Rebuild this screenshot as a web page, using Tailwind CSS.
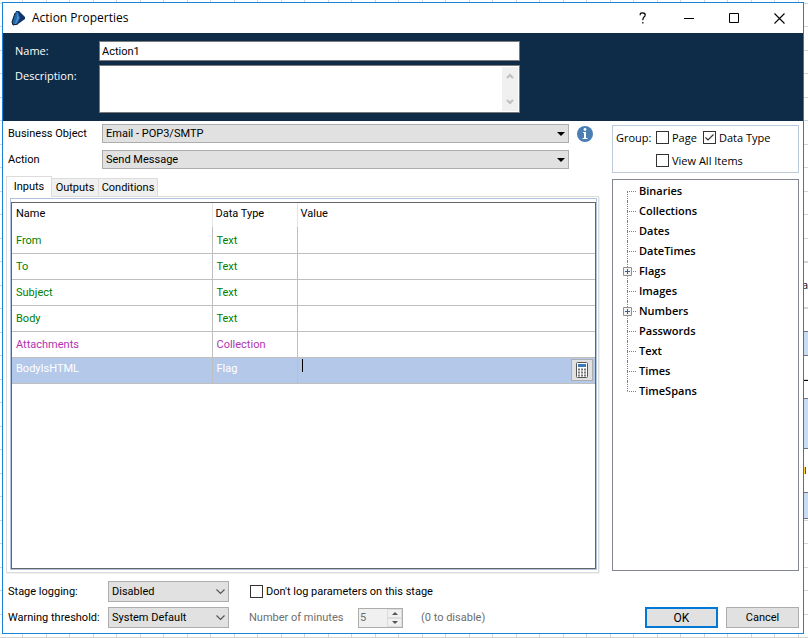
<!DOCTYPE html>
<html lang="en">
<head>
  <meta charset="UTF-8">
  <meta name="viewport" content="width=device-width, initial-scale=1.0">
  <title>Action Properties</title>
  <script src="https://cdn.jsdelivr.net/npm/@tailwindcss/browser@4"></script>
</head>
<body class="relative flex min-h-screen flex-col overflow-hidden bg-white bg-[repeating-linear-gradient(to_right,transparent_0_22px,#d4d4d4_22px_23px,transparent_23px_46px,#d4d4d4_46px_47px),repeating-linear-gradient(to_bottom,transparent_0_3px,#d4d4d4_3px_4px,transparent_4px_26px,#d4d4d4_26px_27px,transparent_27px_47px)] pt-[2px] pr-1 pb-1 pl-[2px] font-[Roboto,sans-serif] text-[11px] leading-4 text-black">

  <!-- Process canvas showing past the dialog edge -->
  <div class="absolute inset-y-0 right-0 w-1 overflow-hidden font-['Open_Sans',sans-serif]" aria-hidden="true">
    <div class="absolute inset-x-0 top-[262px] h-[46px] border-y border-zinc-300 bg-white"></div>
    <div class="absolute top-[277px] -left-[2px]">a</div>
    <div class="absolute inset-x-0 top-[331px] h-[25px] border-y border-gray-500 bg-[#c9ddf2]"></div>
    <div class="absolute inset-x-0 top-[380px] h-px bg-black"></div>
    <div class="absolute inset-x-0 top-[398px] h-[51px] border-y border-gray-500 bg-[#c9ddf2]"></div>
    <div class="absolute inset-x-0 top-[449px] h-[43px] bg-white"></div>
    <div class="absolute top-[467px] left-0 h-[7px] w-[2px] border-r border-slate-600 bg-amber-300"></div>
    <div class="absolute inset-x-0 top-[492px] h-[27px] border-y border-gray-500 bg-[#c9ddf2]"></div>
  </div>

  <div class="relative flex flex-1 flex-col border border-[#1883d7] bg-white">
    <!-- Title bar -->
    <header class="flex h-[30px] items-center pl-2 font-['Open_Sans',sans-serif] text-xs">
      <svg class="h-[15px] w-[15px]" viewBox="0 0 15 15">
        <path d="M5 0H8L14 6V8L7 13L2 14L1 11Z" fill="#10346b"/>
        <path d="M5 1H7L9 7L6 13H2V10Z" fill="#2468ac"/>
        <path d="M6 1L8 7L5 13H4L6 7Z" fill="#4b92d2"/>
        <path d="M4 2L1 11L2 14L7 13" fill="none" stroke="#0f1f33"/>
      </svg>
      <h1 class="ml-[6px]">Action Properties</h1>
      <div class="ml-auto flex h-full">
        <button class="flex w-[46px] items-center justify-center" aria-label="Help">
          <svg class="h-3 w-2" viewBox="0 0 8 12" fill="none" stroke="#000" stroke-width="1.2"><path d="M1.200 3.200V1.800Q1.500.8 3.500.8Q6.200.8 6.200 2.900Q6.200 4.200 4.800 5.300Q3.800 6.200 3.800 8.200M3.800 10V11.600"/></svg>
        </button>
        <button class="flex w-[46px] items-center justify-center" aria-label="Minimize">
          <svg class="h-[11px] w-[10px]" viewBox="0 0 10 11"><path d="M0 5.500H10" stroke="#000"/></svg>
        </button>
        <button class="flex w-[44px] items-center justify-center" aria-label="Maximize">
          <svg class="h-[10px] w-[10px]" viewBox="0 0 10 10"><path d="M.5.5H9.500V9.500H.5Z" fill="none" stroke="#000"/></svg>
        </button>
        <button class="flex w-[47px] items-center justify-center" aria-label="Close">
          <svg class="h-[11px] w-[11px]" viewBox="0 0 11 11"><path d="M.5.5L10.500 10.500M10.500.5L.5 10.500" stroke="#000" stroke-width="1.100"/></svg>
        </button>
      </div>
    </header>

    <!-- Name and description -->
    <section class="grid h-[88px] grid-cols-[84px_421px] content-start gap-y-1 bg-[#0e2b48] pt-2 pl-3 font-['Open_Sans',sans-serif]">
      <label for="name" class="pt-[2px] text-white">Name:</label>
      <input id="name" type="text" value="Action1" class="h-5 border border-[#7a7a7a] bg-white px-[2px] font-[Roboto,sans-serif]">
      <label for="description" class="pt-[3px] text-white">Description:</label>
      <div class="flex h-12 border border-[#7a7a7a] bg-white p-px">
        <textarea id="description" class="flex-1 resize-none px-[2px] outline-none"></textarea>
        <div class="flex w-4 flex-col items-center justify-between bg-[#f0f0f0] py-[6px]">
          <svg class="h-[6px] w-2" viewBox="0 0 8 6"><path d="M1 5L4 2L7 5" fill="none" stroke="#bfbfbf" stroke-width="2"/></svg>
          <svg class="h-[6px] w-2" viewBox="0 0 8 6"><path d="M1 1L4 4L7 1" fill="none" stroke="#bfbfbf" stroke-width="2"/></svg>
        </div>
      </div>
    </section>

    <main class="grid flex-1 grid-cols-[minmax(0,1fr)_187px] gap-x-[13px] pr-1 pl-[3px]">
      <div class="flex flex-col pt-[3px]">
        <!-- Object and action -->
        <div class="grid grid-cols-[94px_minmax(0,1fr)_30px] items-center gap-y-[7px] pl-[2px]">
          <label for="object">Business Object</label>
          <div class="relative">
            <select id="object" class="block h-[19px] w-full appearance-none border border-[#adadad] bg-[#e1e1e1] px-[3px] leading-4">
              <option>Email - POP3/SMTP</option>
            </select>
            <svg class="pointer-events-none absolute top-2 right-1 h-1 w-2" viewBox="0 0 8 4"><path d="M0 0H8L4 4Z"/></svg>
          </div>
          <svg class="ml-2 h-4 w-4" viewBox="0 0 16 16">
            <circle cx="8" cy="8" r="8" fill="#4a7fb5"/>
            <circle cx="8" cy="3.500" r="1.400" fill="#fff"/>
            <path d="M6 6H9V12H10.500V13H5.500V12H7V7H6Z" fill="#fff"/>
          </svg>
          <label for="action">Action</label>
          <div class="relative">
            <select id="action" class="block h-[19px] w-full appearance-none border border-[#adadad] bg-[#e1e1e1] px-[3px] leading-4">
              <option>Send Message</option>
            </select>
            <svg class="pointer-events-none absolute top-2 right-1 h-1 w-2" viewBox="0 0 8 4"><path d="M0 0H8L4 4Z"/></svg>
          </div>
        </div>

        <!-- Tabs -->
        <div class="relative z-10 mt-[7px] -mb-px flex items-end" role="tablist">
          <button role="tab" aria-selected="true" class="h-[21px] w-[46px] border border-b-0 border-[#dcdcdc] bg-white pb-px">Inputs</button>
          <button role="tab" class="h-[19px] w-[47px] border border-l-0 border-[#dcdcdc] bg-[#f0f0f0]">Outputs</button>
          <button role="tab" class="h-[19px] w-[59px] border border-l-0 border-[#dcdcdc] bg-[#f0f0f0]">Conditions</button>
        </div>

        <div class="flex flex-1 border border-[#dcdcdc] pt-px pr-px pb-[2px] pl-[3px] shadow-[1px_1px_0_#f0f0f0]">
          <div class="flex flex-1 border border-[#b0c4de] pt-[3px]">
            <div class="flex-1 border border-[#646464] bg-white">
              <table class="w-full table-fixed border-collapse text-left">
                <thead>
                  <tr class="h-[24px]">
                    <th class="w-[200px] border-r border-[#e5e5e5] pb-[2px] pl-1 font-normal">Name</th>
                    <th class="w-[85px] border-r border-[#e5e5e5] pb-[2px] pl-[3px] font-normal">Data Type</th>
                    <th class="pb-[2px] pl-[3px] font-normal">Value</th>
                  </tr>
                </thead>
                <tbody class="text-[#008000] [&_td]:border-b [&_td]:border-[#bfbfbf] [&_td]:pl-1 [&_td:not(:last-child)]:border-r [&_tr]:h-[26px]">
                  <tr><td class="pt-[2px]">From</td><td class="pt-[2px]">Text</td><td></td></tr>
                  <tr><td class="pt-[2px]">To</td><td class="pt-[2px]">Text</td><td></td></tr>
                  <tr><td class="pt-[2px]">Subject</td><td class="pt-[2px]">Text</td><td></td></tr>
                  <tr><td class="pt-[2px]">Body</td><td class="pt-[2px]">Text</td><td></td></tr>
                  <tr class="text-[#b232b2]"><td class="pt-[2px]">Attachments</td><td class="pt-[2px]">Collection</td><td></td></tr>
                  <tr class="bg-[#b4c9e9] text-white">
                    <td class="pb-[2px]">BodyIsHTML</td>
                    <td class="pb-[2px]">Flag</td>
                    <td>
                      <div class="flex justify-between pr-[2px]">
                        <span class="h-[13px] w-px bg-black"></span>
                        <button class="flex h-[22px] w-[22px] items-center justify-center border border-[#adadad] bg-[#e1e1e1]" aria-label="Calculator">
                          <svg class="h-4 w-3" viewBox="0 0 12 16">
                            <rect x=".5" y=".5" width="11" height="15" rx="1" fill="#fff" stroke="#555"/>
                            <path d="M2 2H10V5H2Z" fill="#3c78b4"/>
                            <path d="M2 7.500H10M2 10.500H10M2 13.500H10" stroke="#777" stroke-width="2" stroke-dasharray="2 1"/>
                          </svg>
                        </button>
                      </div>
                    </td>
                  </tr>
                </tbody>
              </table>
            </div>
          </div>
        </div>
      </div>

      <!-- Data item explorer -->
      <aside class="flex flex-col pt-1 pb-[2px] font-['Open_Sans',sans-serif]">
        <fieldset class="grid h-12 grid-cols-[40px_47px_1fr] grid-rows-[23px_23px] items-center border border-[#bccadc] pl-[3px]">
          <span>Group:</span>
          <label class="flex items-center gap-[3px]">
            <input type="checkbox" class="h-[13px] w-[13px] appearance-none border border-[#333] bg-white">Page
          </label>
          <label class="flex items-center gap-[3px]">
            <span class="relative flex">
              <input type="checkbox" checked class="h-[13px] w-[13px] appearance-none border border-[#333] bg-white">
              <svg class="pointer-events-none absolute inset-0 h-[13px] w-[13px]" viewBox="0 0 13 13"><path d="M2.500 6.500L5 9L10.500 3.500" fill="none" stroke="#333" stroke-width="1.200"/></svg>
            </span>Data Type
          </label>
          <label class="col-span-2 col-start-2 flex items-center gap-[3px]">
            <input type="checkbox" class="h-[13px] w-[13px] appearance-none border border-[#333] bg-white">View All Items
          </label>
        </fieldset>
        <div class="mt-[6px] flex-1 border border-[#828790] pt-px pl-[14px]">
          <ul id="tree" class="font-semibold"></ul>
        </div>
      </aside>
    </main>

    <!-- Logging options and dialog buttons -->
    <footer class="flex items-end pt-2 pr-1 pb-[5px] pl-[5px]">
      <div class="grid grid-cols-[100px_121px] items-center gap-y-[5px] whitespace-nowrap">
        <label for="logging">Stage logging:</label>
        <div class="relative">
          <select id="logging" class="block h-[21px] w-full appearance-none border border-[#adadad] bg-[#e1e1e1] px-[3px] leading-4">
            <option>Disabled</option>
          </select>
          <svg class="pointer-events-none absolute top-2 right-1 h-[6px] w-[9px]" viewBox="0 0 9 6"><path d="M.5.5L4.500 4.500L8.500.5" fill="none" stroke="#555" stroke-width="1.200"/></svg>
        </div>
        <label for="threshold">Warning threshold:</label>
        <div class="relative">
          <select id="threshold" class="block h-[21px] w-full appearance-none border border-[#adadad] bg-[#e1e1e1] px-[3px] leading-4">
            <option>System Default</option>
          </select>
          <svg class="pointer-events-none absolute top-2 right-1 h-[6px] w-[9px]" viewBox="0 0 9 6"><path d="M.5.5L4.500 4.500L8.500.5" fill="none" stroke="#555" stroke-width="1.200"/></svg>
        </div>
      </div>
      <div class="ml-5 flex flex-col gap-[5px] whitespace-nowrap">
        <label class="ml-px flex h-[21px] items-center gap-[3px]">
          <input type="checkbox" class="h-[13px] w-[13px] appearance-none border border-[#333] bg-white">Don't log parameters on this stage
        </label>
        <div class="flex h-[21px] items-center text-[#6d6d6d]">
          <label for="minutes" class="w-[109px]">Number of minutes</label>
          <div class="flex h-5 w-[45px] border border-[#adadad] bg-[#f0f0f0]">
            <input id="minutes" type="text" value="5" disabled class="w-[28px] px-px">
            <div class="flex flex-1 flex-col">
              <button disabled class="flex flex-1 items-center justify-center border border-[#dcdcdc]" aria-label="Increase"><svg class="h-[3px] w-[6px]" viewBox="0 0 6 3"><path d="M0 3L3 0L6 3Z" fill="#555"/></svg></button>
              <button disabled class="flex flex-1 items-center justify-center border border-[#dcdcdc]" aria-label="Decrease"><svg class="h-[3px] w-[6px]" viewBox="0 0 6 3"><path d="M0 0L3 3L6 0Z" fill="#555"/></svg></button>
            </div>
          </div>
          <span class="ml-[18px]">(0 to disable)</span>
        </div>
      </div>
      <div class="ml-auto flex gap-2">
        <button class="h-[21px] w-[73px] border-2 border-[#0078d7] bg-[#e1e1e1] text-xs">OK</button>
        <button class="h-[21px] w-[73px] border border-[#adadad] bg-[#e1e1e1]">Cancel</button>
      </div>
    </footer>
  </div>

  <script>
    const items = ['Binaries', 'Collections', 'Dates', 'DateTimes', 'Flags', 'Images', 'Numbers', 'Passwords', 'Text', 'Times', 'TimeSpans'];
    const expandable = ['Flags', 'Numbers'];

    document.getElementById('tree').innerHTML = items.map((item, i) => {
      const top = i === 0 ? 'border-transparent' : 'border-[#808080]';
      const bottom = i === items.length - 1 ? 'border-l-transparent' : 'border-l-[#808080]';
      const box = expandable.includes(item)
        ? `<svg class="absolute top-[6px] -left-1 h-[9px] w-[9px]" viewBox="0 0 9 9"><path d="M.5.5H8.500V8.500H.5Z" fill="#f4f4f4" stroke="#919191"/><path d="M2 4.500H7M4.500 2V7" stroke="#3c5a9a"/></svg>`
        : '';
      return `<li class="relative flex h-5 items-center">
        <span class="flex h-full flex-col">
          <span class="h-[10px] w-[9px] border-l border-dotted ${top}"></span>
          <span class="h-[10px] w-[9px] border-t border-l border-dotted border-t-[#808080] ${bottom}"></span>
        </span>${box}<span class="ml-[3px]">${item}</span>
      </li>`;
    }).join('');
  </script>
</body>
</html>
